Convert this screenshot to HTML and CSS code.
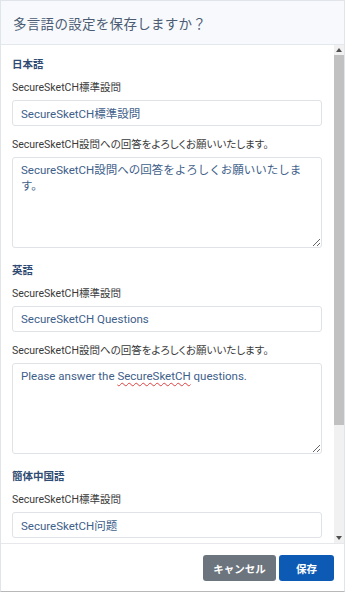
FILE: index.html
```html
<!DOCTYPE html>
<html lang="ja">
<head>
<meta charset="utf-8">
<title>多言語の設定</title>
<link rel="stylesheet" href="styles.css">
</head>
<body>
<div class="modal">
  <div class="modal-header">
    <h1 class="modal-title">多言語の設定を保存しますか？</h1>
  </div>
  <div class="modal-main">
    <div class="modal-body">
      <section class="lang">
        <h2 class="lang-title">日本語</h2>
        <div class="group">
          <label class="label">SecureSketCH標準設問</label>
          <input class="input" type="text" value="SecureSketCH標準設問">
        </div>
        <div class="group">
          <label class="label">SecureSketCH設問への回答をよろしくお願いいたします。</label>
          <div class="textarea" contenteditable="true">SecureSketCH設問への回答をよろしくお願いいたします。</div>
        </div>
      </section>
      <section class="lang">
        <h2 class="lang-title">英語</h2>
        <div class="group">
          <label class="label">SecureSketCH標準設問</label>
          <input class="input" type="text" value="SecureSketCH Questions">
        </div>
        <div class="group">
          <label class="label">SecureSketCH設問への回答をよろしくお願いいたします。</label>
          <div class="textarea" contenteditable="true" lang="en">Please answer the <span class="misspelled">SecureSketCH</span> questions.</div>
        </div>
      </section>
      <section class="lang">
        <h2 class="lang-title">簡体中国語</h2>
        <div class="group">
          <label class="label">SecureSketCH標準設問</label>
          <input class="input" type="text" value="SecureSketCH问题">
        </div>
      </section>
    </div>
    <div class="scrollbar" aria-hidden="true">
      <span class="sb-btn">
        <svg width="6" height="4" viewBox="0 0 6 4"><path d="M0 4L3 0L6 4Z" fill="#505050"/></svg>
      </span>
      <span class="sb-thumb"></span>
      <span class="sb-space"></span>
      <span class="sb-btn">
        <svg width="6" height="4" viewBox="0 0 6 4"><path d="M0 0L6 0L3 4Z" fill="#505050"/></svg>
      </span>
    </div>
  </div>
  <div class="modal-footer">
    <button class="btn btn-cancel" type="button">キャンセル</button>
    <button class="btn btn-save" type="button">保存</button>
  </div>
</div>
</body>
</html>
```
FILE: styles.css
```css
* { box-sizing: border-box; }
html, body { margin: 0; padding: 0; background: #ffffff; }
body {
  font-family: Roboto, "Noto Sans CJK JP", sans-serif;
  color: #333333;
}
.modal {
  width: 345px;
  height: 592px;
  display: flex;
  flex-direction: column;
  background: #ffffff;
  border: 1px solid #e1e4e9;
  border-bottom-color: #b8b8b8;
}
.modal-header {
  height: 44px;
  flex: none;
  display: flex;
  align-items: center;
  padding: 0 12px;
  background: #f7f9fc;
  border-bottom: 1px solid #e3e7ee;
}
.modal-title {
  margin: 0;
  font-size: 13.5px;
  font-weight: 400;
  color: #4b5c74;
  letter-spacing: 0.3px;
}
.modal-main {
  flex: 1;
  min-height: 0;
  display: flex;
}
.modal-body {
  flex: 1;
  min-width: 0;
  overflow: hidden;
  padding: 12px 12px 0 11px;
}
.scrollbar {
  width: 10px;
  flex: none;
  display: flex;
  flex-direction: column;
  background: #f1f1f1;
}
.sb-btn {
  height: 10px;
  flex: none;
  display: flex;
  align-items: center;
  justify-content: center;
}
.sb-thumb {
  height: 370px;
  flex: none;
  background: #c1c1c1;
}
.sb-space { flex: 1; }
.lang { display: flex; flex-direction: column; }
.lang + .lang { margin-top: 15px; }
.lang-title {
  margin: 0 0 7px;
  font-size: 10.5px;
  line-height: 16px;
  font-weight: 700;
  color: #2f4b73;
}
.group { display: flex; flex-direction: column; }
.group + .group { margin-top: 11px; }
.label {
  display: block;
  font-size: 10.5px;
  line-height: 16px;
  color: #3a3a3a;
  margin-bottom: 4px;
  font-feature-settings: "palt";
}
.input {
  display: block;
  width: 100%;
  height: 26px;
  margin: 0;
  padding: 0 8px;
  border: 1px solid #dfe2e6;
  border-radius: 3px;
  font-family: Roboto, "Noto Sans CJK JP", sans-serif;
  font-size: 11.5px;
  color: #40608a;
  background: #ffffff;
  outline: none;
}
.textarea {
  display: block;
  width: 100%;
  height: 91px;
  padding: 5px 8px;
  border: 1px solid #dfe2e6;
  border-radius: 3px;
  font-size: 11.5px;
  line-height: 15.5px;
  color: #40608a;
  background: #ffffff;
  overflow: auto;
  resize: vertical;
  outline: none;
}
.misspelled {
  text-decoration: underline wavy #e04040;
  text-decoration-thickness: 1px;
  text-underline-offset: 2px;
}
.modal-footer {
  flex: none;
  display: flex;
  justify-content: flex-end;
  gap: 3px;
  padding: 11px 10px 10px;
  border-top: 1px solid #e6e8ec;
}
.btn {
  height: 26px;
  padding: 0 10px;
  border: none;
  border-radius: 3px;
  font-family: Roboto, "Noto Sans CJK JP", sans-serif;
  font-size: 10.5px;
  font-weight: 700;
  color: #ffffff;
  cursor: pointer;
}
.btn-cancel { background: #6c757d; width: 73px; }
.btn-save { background: #0d5ab5; width: 55px; }
```
